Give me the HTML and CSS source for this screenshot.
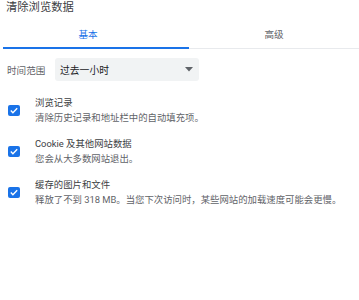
FILE: index.html
```html
<!DOCTYPE html>
<html lang="zh">
<head>
<meta charset="utf-8">
<link rel="stylesheet" href="styles.css">
</head>
<body>
<div class="dialog">
  <h1 class="title">清除浏览数据</h1>
  <div class="tabs">
    <div class="tab active">基本</div>
    <div class="tab">高级</div>
  </div>
  <div class="range">
    <span class="range-label">时间范围</span>
    <div class="select">
      <span>过去一小时</span>
      <svg class="arrow" width="8" height="5" viewBox="0 0 8 5"><path d="M0 0h8L4 4.5z" fill="#5f6368"/></svg>
    </div>
  </div>
  <div class="items">
    <div class="item">
      <span class="check"><svg width="8" height="7" viewBox="0 0 8 7"><path d="M0.8 3.6l2.1 2.1L7.2 1.3" fill="none" stroke="#fff" stroke-width="1.4"/></svg></span>
      <div class="text">
        <div class="main">浏览记录</div>
        <div class="sub">清除历史记录和地址栏中的自动填充项。</div>
      </div>
    </div>
    <div class="item">
      <span class="check"><svg width="8" height="7" viewBox="0 0 8 7"><path d="M0.8 3.6l2.1 2.1L7.2 1.3" fill="none" stroke="#fff" stroke-width="1.4"/></svg></span>
      <div class="text">
        <div class="main">Cookie 及其他网站数据</div>
        <div class="sub">您会从大多数网站退出。</div>
      </div>
    </div>
    <div class="item">
      <span class="check"><svg width="8" height="7" viewBox="0 0 8 7"><path d="M0.8 3.6l2.1 2.1L7.2 1.3" fill="none" stroke="#fff" stroke-width="1.4"/></svg></span>
      <div class="text">
        <div class="main">缓存的图片和文件</div>
        <div class="sub">释放了不到 318 MB。当您下次访问时，某些网站的加载速度可能会更慢。</div>
      </div>
    </div>
  </div>
</div>
</body>
</html>
```
FILE: styles.css
```css
html, body {
  margin: 0;
  padding: 0;
  background: #fff;
}
body {
  font-family: Roboto, "Noto Sans CJK SC", sans-serif;
  color: #202124;
}
.dialog {
  width: 359px;
}
.title {
  margin: 0;
  padding: 1px 0 0 6px;
  height: 19px;
  font-size: 11.3px;
  line-height: 14px;
  font-weight: 400;
  color: #3c4043;
}
.tabs {
  display: flex;
  margin-left: 3px;
  border-bottom: 1px solid #e8eaed;
}
.tab {
  flex: 1;
  height: 27px;
  display: flex;
  align-items: center;
  justify-content: center;
  font-size: 9.6px;
  color: #5f6368;
  border-bottom: 2px solid transparent;
  margin-bottom: -1px;
}
.tab.active {
  color: #1a73e8;
  border-bottom-color: #1a73e8;
  padding-right: 16px;
}
.range {
  display: flex;
  align-items: center;
  padding: 9px 0 0 7px;
}
.range-label {
  font-size: 9.6px;
  color: #5f6368;
  width: 48px;
}
.select {
  width: 144px;
  height: 23px;
  box-sizing: border-box;
  background: #f1f3f4;
  border-radius: 3px;
  display: flex;
  align-items: center;
  justify-content: space-between;
  padding: 0 6px 0 5px;
  font-size: 9.8px;
  color: #202124;
}
.arrow {
  display: block;
}
.items {
  display: flex;
  flex-direction: column;
  gap: 11px;
  padding: 14px 0 0 8px;
}
.item {
  display: flex;
  align-items: center;
}
.check {
  width: 12px;
  height: 11px;
  border-radius: 2px;
  background: #1a73e8;
  display: flex;
  align-items: center;
  justify-content: center;
  margin-right: 15px;
  flex-shrink: 0;
}
.check svg {
  display: block;
}
.text {
  font-size: 9.4px;
  line-height: 15px;
}
.main {
  color: #3c4043;
}
.sub {
  color: #5f6368;
}
```
